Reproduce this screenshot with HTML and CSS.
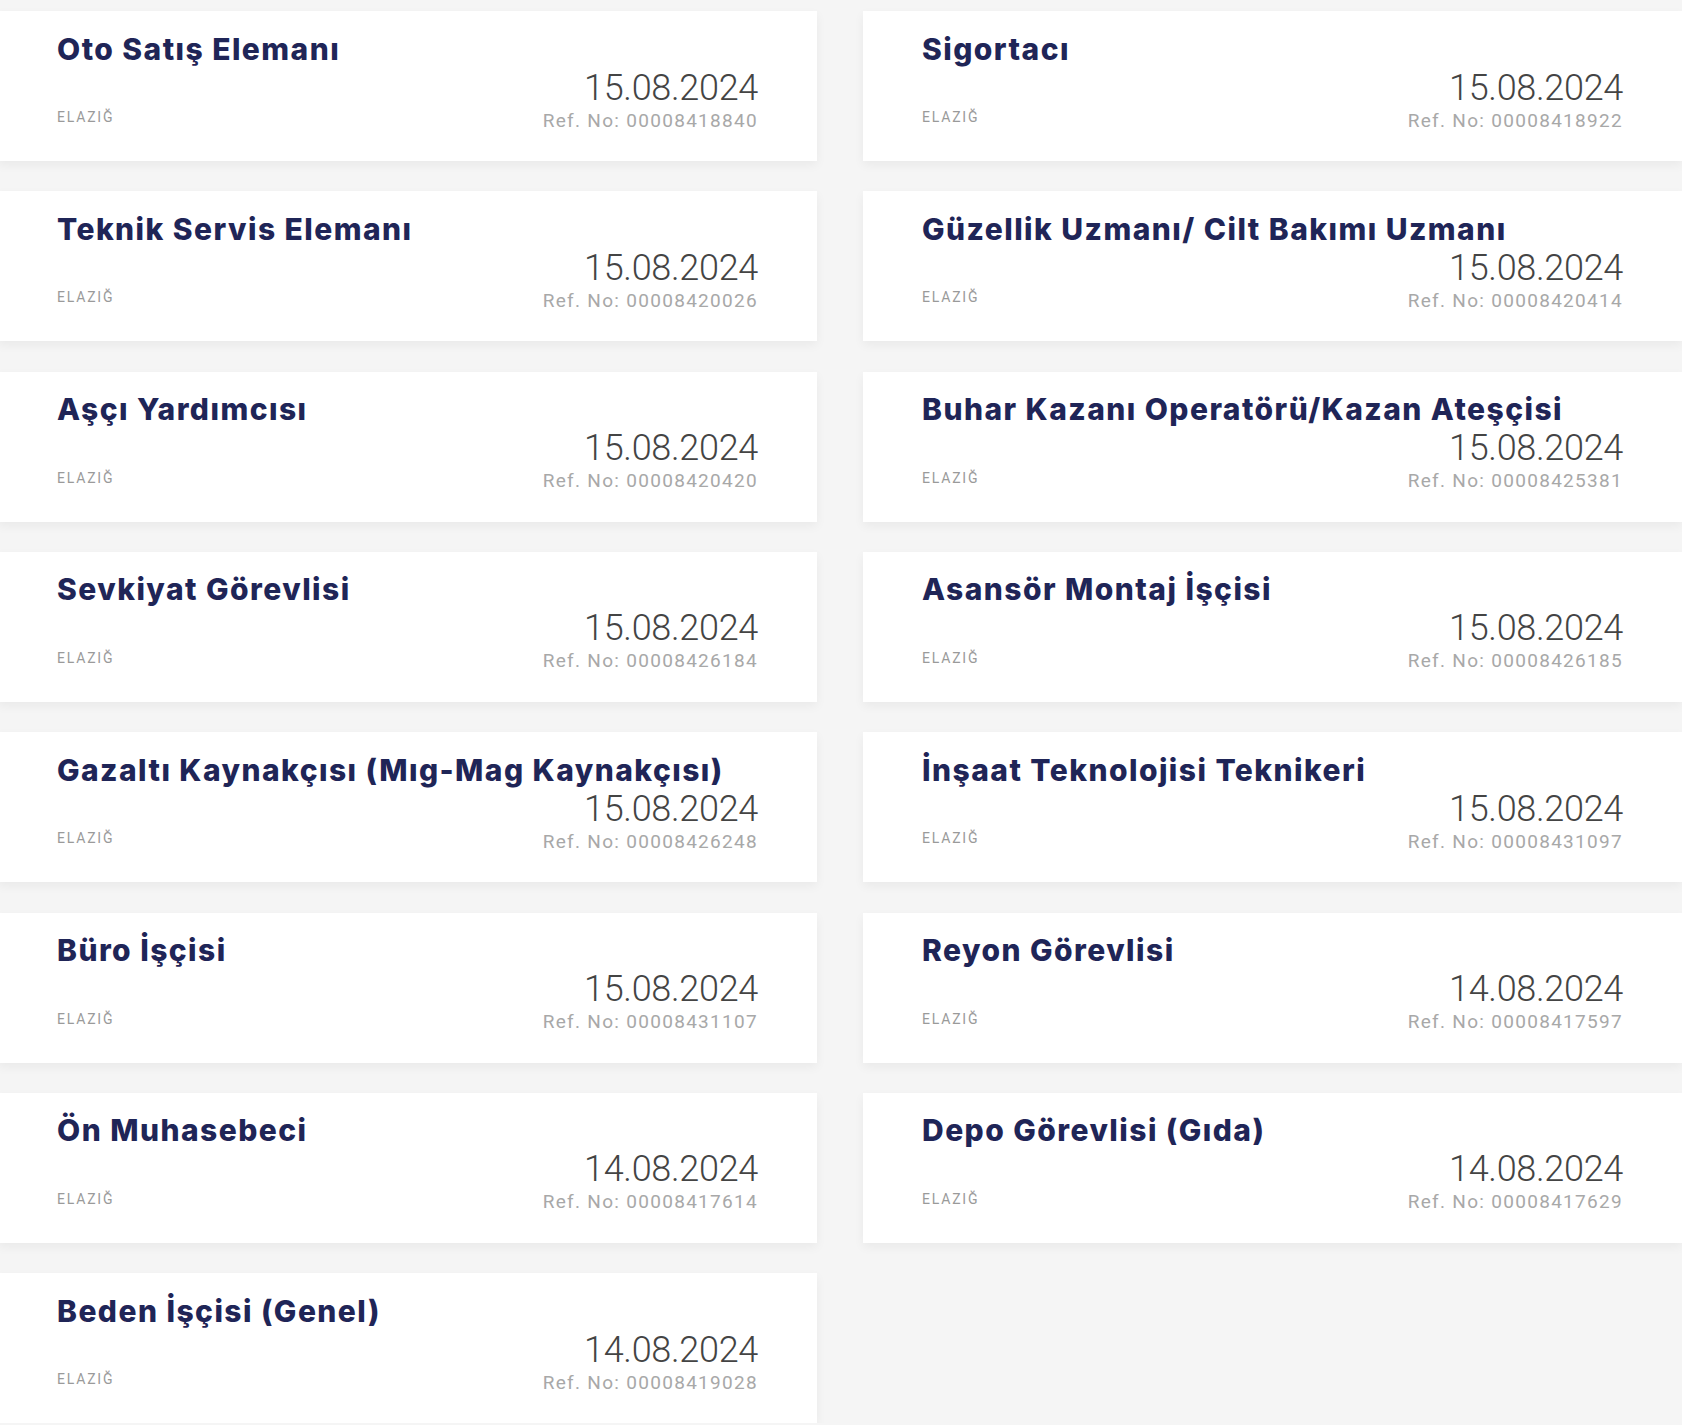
FILE: index.html
```html
<!DOCTYPE html>
<html lang="tr">
<head>
    <meta charset="UTF-8">
    <meta name="viewport" content="width=device-width, initial-scale=1.0">
    <title>İş İlanları - Elazığ</title>
    <link rel="stylesheet" href="styles.css">
</head>
<body>
    <div id="job-list">
        <div class="job-card">
            <h3 class="job-title">Oto Satış Elemanı</h3>
            <div class="job-meta">
                <span class="job-city">ELAZIĞ</span>
                <div class="job-info">
                    <div class="job-date">15.08.2024</div>
                    <div class="job-ref">Ref. No: 00008418840</div>
                </div>
            </div>
        </div>
        <div class="job-card">
            <h3 class="job-title">Sigortacı</h3>
            <div class="job-meta">
                <span class="job-city">ELAZIĞ</span>
                <div class="job-info">
                    <div class="job-date">15.08.2024</div>
                    <div class="job-ref">Ref. No: 00008418922</div>
                </div>
            </div>
        </div>
        <div class="job-card">
            <h3 class="job-title">Teknik Servis Elemanı</h3>
            <div class="job-meta">
                <span class="job-city">ELAZIĞ</span>
                <div class="job-info">
                    <div class="job-date">15.08.2024</div>
                    <div class="job-ref">Ref. No: 00008420026</div>
                </div>
            </div>
        </div>
        <div class="job-card">
            <h3 class="job-title">Güzellik Uzmanı/ Cilt Bakımı Uzmanı</h3>
            <div class="job-meta">
                <span class="job-city">ELAZIĞ</span>
                <div class="job-info">
                    <div class="job-date">15.08.2024</div>
                    <div class="job-ref">Ref. No: 00008420414</div>
                </div>
            </div>
        </div>
        <div class="job-card">
            <h3 class="job-title">Aşçı Yardımcısı</h3>
            <div class="job-meta">
                <span class="job-city">ELAZIĞ</span>
                <div class="job-info">
                    <div class="job-date">15.08.2024</div>
                    <div class="job-ref">Ref. No: 00008420420</div>
                </div>
            </div>
        </div>
        <div class="job-card">
            <h3 class="job-title">Buhar Kazanı Operatörü/Kazan Ateşçisi</h3>
            <div class="job-meta">
                <span class="job-city">ELAZIĞ</span>
                <div class="job-info">
                    <div class="job-date">15.08.2024</div>
                    <div class="job-ref">Ref. No: 00008425381</div>
                </div>
            </div>
        </div>
        <div class="job-card">
            <h3 class="job-title">Sevkiyat Görevlisi</h3>
            <div class="job-meta">
                <span class="job-city">ELAZIĞ</span>
                <div class="job-info">
                    <div class="job-date">15.08.2024</div>
                    <div class="job-ref">Ref. No: 00008426184</div>
                </div>
            </div>
        </div>
        <div class="job-card">
            <h3 class="job-title">Asansör Montaj İşçisi</h3>
            <div class="job-meta">
                <span class="job-city">ELAZIĞ</span>
                <div class="job-info">
                    <div class="job-date">15.08.2024</div>
                    <div class="job-ref">Ref. No: 00008426185</div>
                </div>
            </div>
        </div>
        <div class="job-card">
            <h3 class="job-title">Gazaltı Kaynakçısı (Mıg-Mag Kaynakçısı)</h3>
            <div class="job-meta">
                <span class="job-city">ELAZIĞ</span>
                <div class="job-info">
                    <div class="job-date">15.08.2024</div>
                    <div class="job-ref">Ref. No: 00008426248</div>
                </div>
            </div>
        </div>
        <div class="job-card">
            <h3 class="job-title">İnşaat Teknolojisi Teknikeri</h3>
            <div class="job-meta">
                <span class="job-city">ELAZIĞ</span>
                <div class="job-info">
                    <div class="job-date">15.08.2024</div>
                    <div class="job-ref">Ref. No: 00008431097</div>
                </div>
            </div>
        </div>
        <div class="job-card">
            <h3 class="job-title">Büro İşçisi</h3>
            <div class="job-meta">
                <span class="job-city">ELAZIĞ</span>
                <div class="job-info">
                    <div class="job-date">15.08.2024</div>
                    <div class="job-ref">Ref. No: 00008431107</div>
                </div>
            </div>
        </div>
        <div class="job-card">
            <h3 class="job-title">Reyon Görevlisi</h3>
            <div class="job-meta">
                <span class="job-city">ELAZIĞ</span>
                <div class="job-info">
                    <div class="job-date">14.08.2024</div>
                    <div class="job-ref">Ref. No: 00008417597</div>
                </div>
            </div>
        </div>
        <div class="job-card">
            <h3 class="job-title">Ön Muhasebeci</h3>
            <div class="job-meta">
                <span class="job-city">ELAZIĞ</span>
                <div class="job-info">
                    <div class="job-date">14.08.2024</div>
                    <div class="job-ref">Ref. No: 00008417614</div>
                </div>
            </div>
        </div>
        <div class="job-card">
            <h3 class="job-title">Depo Görevlisi (Gıda)</h3>
            <div class="job-meta">
                <span class="job-city">ELAZIĞ</span>
                <div class="job-info">
                    <div class="job-date">14.08.2024</div>
                    <div class="job-ref">Ref. No: 00008417629</div>
                </div>
            </div>
        </div>
        <div class="job-card">
            <h3 class="job-title">Beden İşçisi (Genel)</h3>
            <div class="job-meta">
                <span class="job-city">ELAZIĞ</span>
                <div class="job-info">
                    <div class="job-date">14.08.2024</div>
                    <div class="job-ref">Ref. No: 00008419028</div>
                </div>
            </div>
        </div>
    </div>
</body>
</html>
```

FILE: styles.css
```css
body {
    margin: 0;
    background-color: #f5f5f5;
    font-family: Roboto, "Liberation Sans", sans-serif;
    color: #333;
    overflow: hidden;
}
#job-list {
    display: grid;
    grid-template-columns: 819px 819px;
    column-gap: 46px;
    row-gap: 30.33px;
    padding-top: 11px;
    margin-left: -2px;
}
.job-card {
    background-color: #fff;
    height: 150px;
    box-sizing: border-box;
    padding: 19.5px 59px 0 59px;
    box-shadow: 0 4px 10px rgba(0,0,0,0.05);
}
.job-title {
    margin: 0;
    font-family: Inter, "Open Sans", sans-serif;
    font-weight: 800;
    font-size: 30px;
    line-height: 36px;
    letter-spacing: 1.45px;
    color: #1f2557;
    white-space: nowrap;
}
.job-meta {
    display: flex;
    justify-content: space-between;
    align-items: flex-end;
}
.job-city {
    font-size: 14px;
    line-height: 16px;
    letter-spacing: 1.8px;
    color: #9a9a9a;
    margin-bottom: 6.5px;
}
.job-info {
    text-align: right;
}
.job-date {
    margin-top: 1px;
    font-size: 36px;
    font-weight: 300;
    line-height: 40px;
    letter-spacing: -0.3px;
    color: #444;
}
.job-ref {
    margin-top: 2px;
    font-size: 19px;
    line-height: 22px;
    letter-spacing: 1.3px;
    color: #a8a8a8;
}
```
